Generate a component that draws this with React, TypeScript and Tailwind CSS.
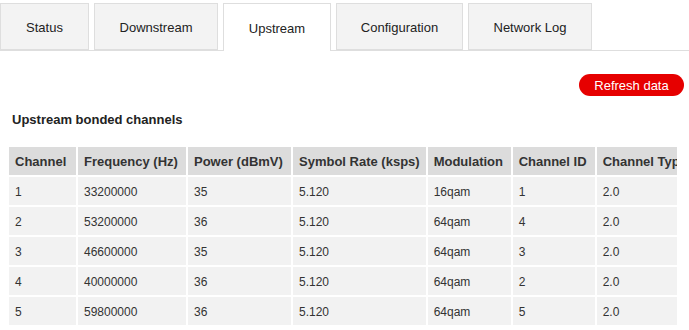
const tabs = [
  { label: 'Status', w: 'w-[89px]' },
  { label: 'Downstream', w: 'w-[124px]' },
  { label: 'Upstream', w: 'w-[108px]', active: true },
  { label: 'Configuration', w: 'w-[127px]' },
  { label: 'Network Log', w: 'w-[124px]' },
];

const columns = [
  { label: 'Channel', w: 'w-[67px]' },
  { label: 'Frequency (Hz)', w: 'w-[108px]' },
  { label: 'Power (dBmV)', w: 'w-[103px]' },
  { label: 'Symbol Rate (ksps)', w: 'w-[132px]' },
  { label: 'Modulation', w: 'w-[83px]' },
  { label: 'Channel ID', w: 'w-[82px]' },
  { label: 'Channel Type', w: 'w-[110px]' },
];

const rows = [
  ['1', '33200000', '35', '5.120', '16qam', '1', '2.0'],
  ['2', '53200000', '36', '5.120', '64qam', '4', '2.0'],
  ['3', '46600000', '35', '5.120', '64qam', '3', '2.0'],
  ['4', '40000000', '36', '5.120', '64qam', '2', '2.0'],
  ['5', '59800000', '36', '5.120', '64qam', '5', '2.0'],
];

export default function App() {
  return (
    <div className="w-[689px] h-[330px] overflow-hidden bg-white font-['Liberation_Sans',Arial,sans-serif] text-[#333]">
      {/* tab bar */}
      <div className="flex gap-[5px] pt-[3px] h-[51px] border-b border-[#dedede]">
        {tabs.map((t) => (
          <div
            key={t.label}
            className={`${t.w} flex items-center justify-center pt-[2px] border border-[#dedede] text-[13px] text-[#222] ${
              t.active ? 'bg-white border-b-0 h-[48px]' : 'bg-[#f3f3f3] h-[47px]'
            }`}
          >
            {t.label}
          </div>
        ))}
      </div>

      <div className="flex justify-end pr-[5px] mt-[23px]">
        <button className="w-[105px] h-[22px] rounded-full bg-[#e60000] text-white text-[13px] leading-none">
          Refresh data
        </button>
      </div>

      <h2 className="ml-[12px] mt-[16px] text-[13px] font-bold leading-[16px] text-[#222]">
        Upstream bonded channels
      </h2>

      <div className="w-[677px] overflow-hidden pl-[7px] mt-[17px]">
        <table className="w-max border-separate border-spacing-[2px] text-left whitespace-nowrap">
          <thead>
            <tr>
              {columns.map((c) => (
                <th
                  key={c.label}
                  className={`${c.w} h-[28px] px-[6px] pt-[1px] bg-[#dcdcdc] text-[13px] font-bold text-[#333]`}
                >
                  {c.label}
                </th>
              ))}
            </tr>
          </thead>
          <tbody>
            {rows.map((r) => (
              <tr key={r[0]}>
                {r.map((v, i) => (
                  <td key={i} className="h-[28px] px-[6px] pt-[1px] bg-[#f2f2f2] text-[12px] text-[#333]">
                    {v}
                  </td>
                ))}
              </tr>
            ))}
          </tbody>
        </table>
      </div>
    </div>
  );
}
